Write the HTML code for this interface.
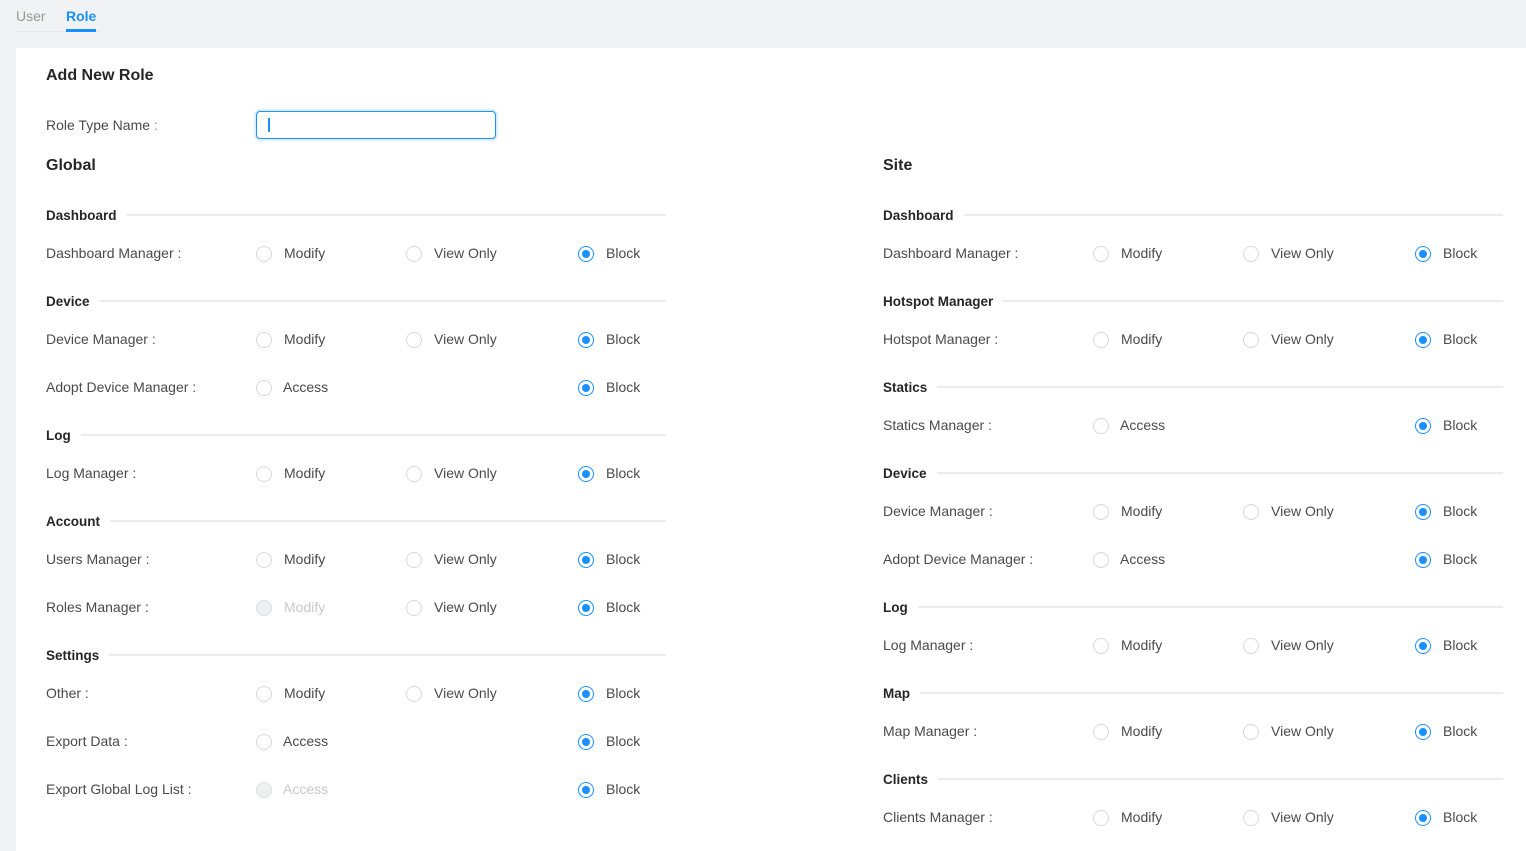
<!DOCTYPE html>
<html><head><meta charset="utf-8"><style>
*{margin:0;padding:0;box-sizing:border-box}
body{width:1526px;height:851px;background:#f1f2f4;font-family:"Liberation Sans",Arial,sans-serif;font-size:14px;color:#4a4a4a;position:relative;overflow:hidden}
.tabs{position:absolute;left:16px;top:0;height:32px;width:84px;border-bottom:1px solid #e4e6ea}
.tab{position:absolute;top:8px;font-size:14px}
.panel{position:absolute;left:16px;top:48px;right:0;bottom:0;background:#fff}
.a{position:absolute;white-space:nowrap}
.h1{font-size:16px;font-weight:bold;color:#262626}
.sec{position:absolute;height:20px;display:flex;align-items:center;font-weight:bold;font-size:13.5px;color:#262626}
.sec i{flex:1;height:2px;background:#ebebeb;margin-left:10px}
.row{position:absolute;height:20px;line-height:20px}
.lb{position:absolute;white-space:nowrap;color:#4a4a4a}
.rd{position:absolute;top:3px;width:16px;height:16px;border:1px solid #d9d9d9;border-radius:50%;background:#fff}
.rd.on{border-color:#1890ff}
.rd.on:after{content:"";position:absolute;left:3px;top:3px;width:8px;height:8px;border-radius:50%;background:#1890ff}
.rd.dis{background:#eef0f2;border-color:#dcdfe3}
.t{position:absolute;white-space:nowrap;color:#4a4a4a}
.t.dis{color:#c8c8c8}
</style></head><body>
<div class="tabs"><span class="tab" style="left:0;color:#999">User</span><span class="tab" style="left:50px;color:#1890ff;font-weight:bold">Role</span><div style="position:absolute;left:50px;top:29px;width:30px;height:3px;background:#1890ff"></div></div>
<div class="a h1" style="left:46px;top:67px">Add New Role</div>
<div class="a" style="left:46px;top:117px">Role Type Name<span style="color:#888"> :</span></div>
<div class="a" style="left:256px;top:111px;width:240px;height:28px;border:1px solid #1890ff;border-radius:4px;box-shadow:0 0 0 2px rgba(24,144,255,.15)"><div style="position:absolute;left:11px;top:6px;width:2px;height:14px;background:#1890ff"></div></div>
<div class="a h1" style="left:46px;top:157px">Global</div>
<div class="a h1" style="left:883px;top:157px">Site</div>

<div id="c"></div>
<!-- LEFT COLUMN -->
<div class="sec" style="left:46px;width:620px;top:205px">Dashboard<i></i></div>
<div class="row" style="left:46px;top:243px;width:620px"><span class="lb">Dashboard Manager :</span><span class="rd" style="left:210px"></span><span class="t" style="left:238px">Modify</span><span class="rd" style="left:360px"></span><span class="t" style="left:388px">View Only</span><span class="rd on" style="left:532px"></span><span class="t" style="left:560px">Block</span></div>
<div class="sec" style="left:46px;width:620px;top:291px">Device<i></i></div>
<div class="row" style="left:46px;top:329px;width:620px"><span class="lb">Device Manager :</span><span class="rd" style="left:210px"></span><span class="t" style="left:238px">Modify</span><span class="rd" style="left:360px"></span><span class="t" style="left:388px">View Only</span><span class="rd on" style="left:532px"></span><span class="t" style="left:560px">Block</span></div>
<div class="row" style="left:46px;top:377px;width:620px"><span class="lb">Adopt Device Manager :</span><span class="rd" style="left:210px"></span><span class="t" style="left:237px">Access</span><span class="rd on" style="left:532px"></span><span class="t" style="left:560px">Block</span></div>
<div class="sec" style="left:46px;width:620px;top:425px">Log<i></i></div>
<div class="row" style="left:46px;top:463px;width:620px"><span class="lb">Log Manager :</span><span class="rd" style="left:210px"></span><span class="t" style="left:238px">Modify</span><span class="rd" style="left:360px"></span><span class="t" style="left:388px">View Only</span><span class="rd on" style="left:532px"></span><span class="t" style="left:560px">Block</span></div>
<div class="sec" style="left:46px;width:620px;top:511px">Account<i></i></div>
<div class="row" style="left:46px;top:549px;width:620px"><span class="lb">Users Manager :</span><span class="rd" style="left:210px"></span><span class="t" style="left:238px">Modify</span><span class="rd" style="left:360px"></span><span class="t" style="left:388px">View Only</span><span class="rd on" style="left:532px"></span><span class="t" style="left:560px">Block</span></div>
<div class="row" style="left:46px;top:597px;width:620px"><span class="lb">Roles Manager :</span><span class="rd dis" style="left:210px"></span><span class="t dis" style="left:238px">Modify</span><span class="rd" style="left:360px"></span><span class="t" style="left:388px">View Only</span><span class="rd on" style="left:532px"></span><span class="t" style="left:560px">Block</span></div>
<div class="sec" style="left:46px;width:620px;top:645px">Settings<i></i></div>
<div class="row" style="left:46px;top:683px;width:620px"><span class="lb">Other :</span><span class="rd" style="left:210px"></span><span class="t" style="left:238px">Modify</span><span class="rd" style="left:360px"></span><span class="t" style="left:388px">View Only</span><span class="rd on" style="left:532px"></span><span class="t" style="left:560px">Block</span></div>
<div class="row" style="left:46px;top:731px;width:620px"><span class="lb">Export Data :</span><span class="rd" style="left:210px"></span><span class="t" style="left:237px">Access</span><span class="rd on" style="left:532px"></span><span class="t" style="left:560px">Block</span></div>
<div class="row" style="left:46px;top:779px;width:620px"><span class="lb">Export Global Log List :</span><span class="rd dis" style="left:210px"></span><span class="t dis" style="left:237px">Access</span><span class="rd on" style="left:532px"></span><span class="t" style="left:560px">Block</span></div>

<!-- RIGHT COLUMN -->
<div class="sec" style="left:883px;width:620px;top:205px">Dashboard<i></i></div>
<div class="row" style="left:883px;top:243px;width:620px"><span class="lb">Dashboard Manager :</span><span class="rd" style="left:210px"></span><span class="t" style="left:238px">Modify</span><span class="rd" style="left:360px"></span><span class="t" style="left:388px">View Only</span><span class="rd on" style="left:532px"></span><span class="t" style="left:560px">Block</span></div>
<div class="sec" style="left:883px;width:620px;top:291px">Hotspot Manager<i></i></div>
<div class="row" style="left:883px;top:329px;width:620px"><span class="lb">Hotspot Manager :</span><span class="rd" style="left:210px"></span><span class="t" style="left:238px">Modify</span><span class="rd" style="left:360px"></span><span class="t" style="left:388px">View Only</span><span class="rd on" style="left:532px"></span><span class="t" style="left:560px">Block</span></div>
<div class="sec" style="left:883px;width:620px;top:377px">Statics<i></i></div>
<div class="row" style="left:883px;top:415px;width:620px"><span class="lb">Statics Manager :</span><span class="rd" style="left:210px"></span><span class="t" style="left:237px">Access</span><span class="rd on" style="left:532px"></span><span class="t" style="left:560px">Block</span></div>
<div class="sec" style="left:883px;width:620px;top:463px">Device<i></i></div>
<div class="row" style="left:883px;top:501px;width:620px"><span class="lb">Device Manager :</span><span class="rd" style="left:210px"></span><span class="t" style="left:238px">Modify</span><span class="rd" style="left:360px"></span><span class="t" style="left:388px">View Only</span><span class="rd on" style="left:532px"></span><span class="t" style="left:560px">Block</span></div>
<div class="row" style="left:883px;top:549px;width:620px"><span class="lb">Adopt Device Manager :</span><span class="rd" style="left:210px"></span><span class="t" style="left:237px">Access</span><span class="rd on" style="left:532px"></span><span class="t" style="left:560px">Block</span></div>
<div class="sec" style="left:883px;width:620px;top:597px">Log<i></i></div>
<div class="row" style="left:883px;top:635px;width:620px"><span class="lb">Log Manager :</span><span class="rd" style="left:210px"></span><span class="t" style="left:238px">Modify</span><span class="rd" style="left:360px"></span><span class="t" style="left:388px">View Only</span><span class="rd on" style="left:532px"></span><span class="t" style="left:560px">Block</span></div>
<div class="sec" style="left:883px;width:620px;top:683px">Map<i></i></div>
<div class="row" style="left:883px;top:721px;width:620px"><span class="lb">Map Manager :</span><span class="rd" style="left:210px"></span><span class="t" style="left:238px">Modify</span><span class="rd" style="left:360px"></span><span class="t" style="left:388px">View Only</span><span class="rd on" style="left:532px"></span><span class="t" style="left:560px">Block</span></div>
<div class="sec" style="left:883px;width:620px;top:769px">Clients<i></i></div>
<div class="row" style="left:883px;top:807px;width:620px"><span class="lb">Clients Manager :</span><span class="rd" style="left:210px"></span><span class="t" style="left:238px">Modify</span><span class="rd" style="left:360px"></span><span class="t" style="left:388px">View Only</span><span class="rd on" style="left:532px"></span><span class="t" style="left:560px">Block</span></div>
<style>.panel{z-index:-1}</style>
<div class="panel"></div>
</body></html>
